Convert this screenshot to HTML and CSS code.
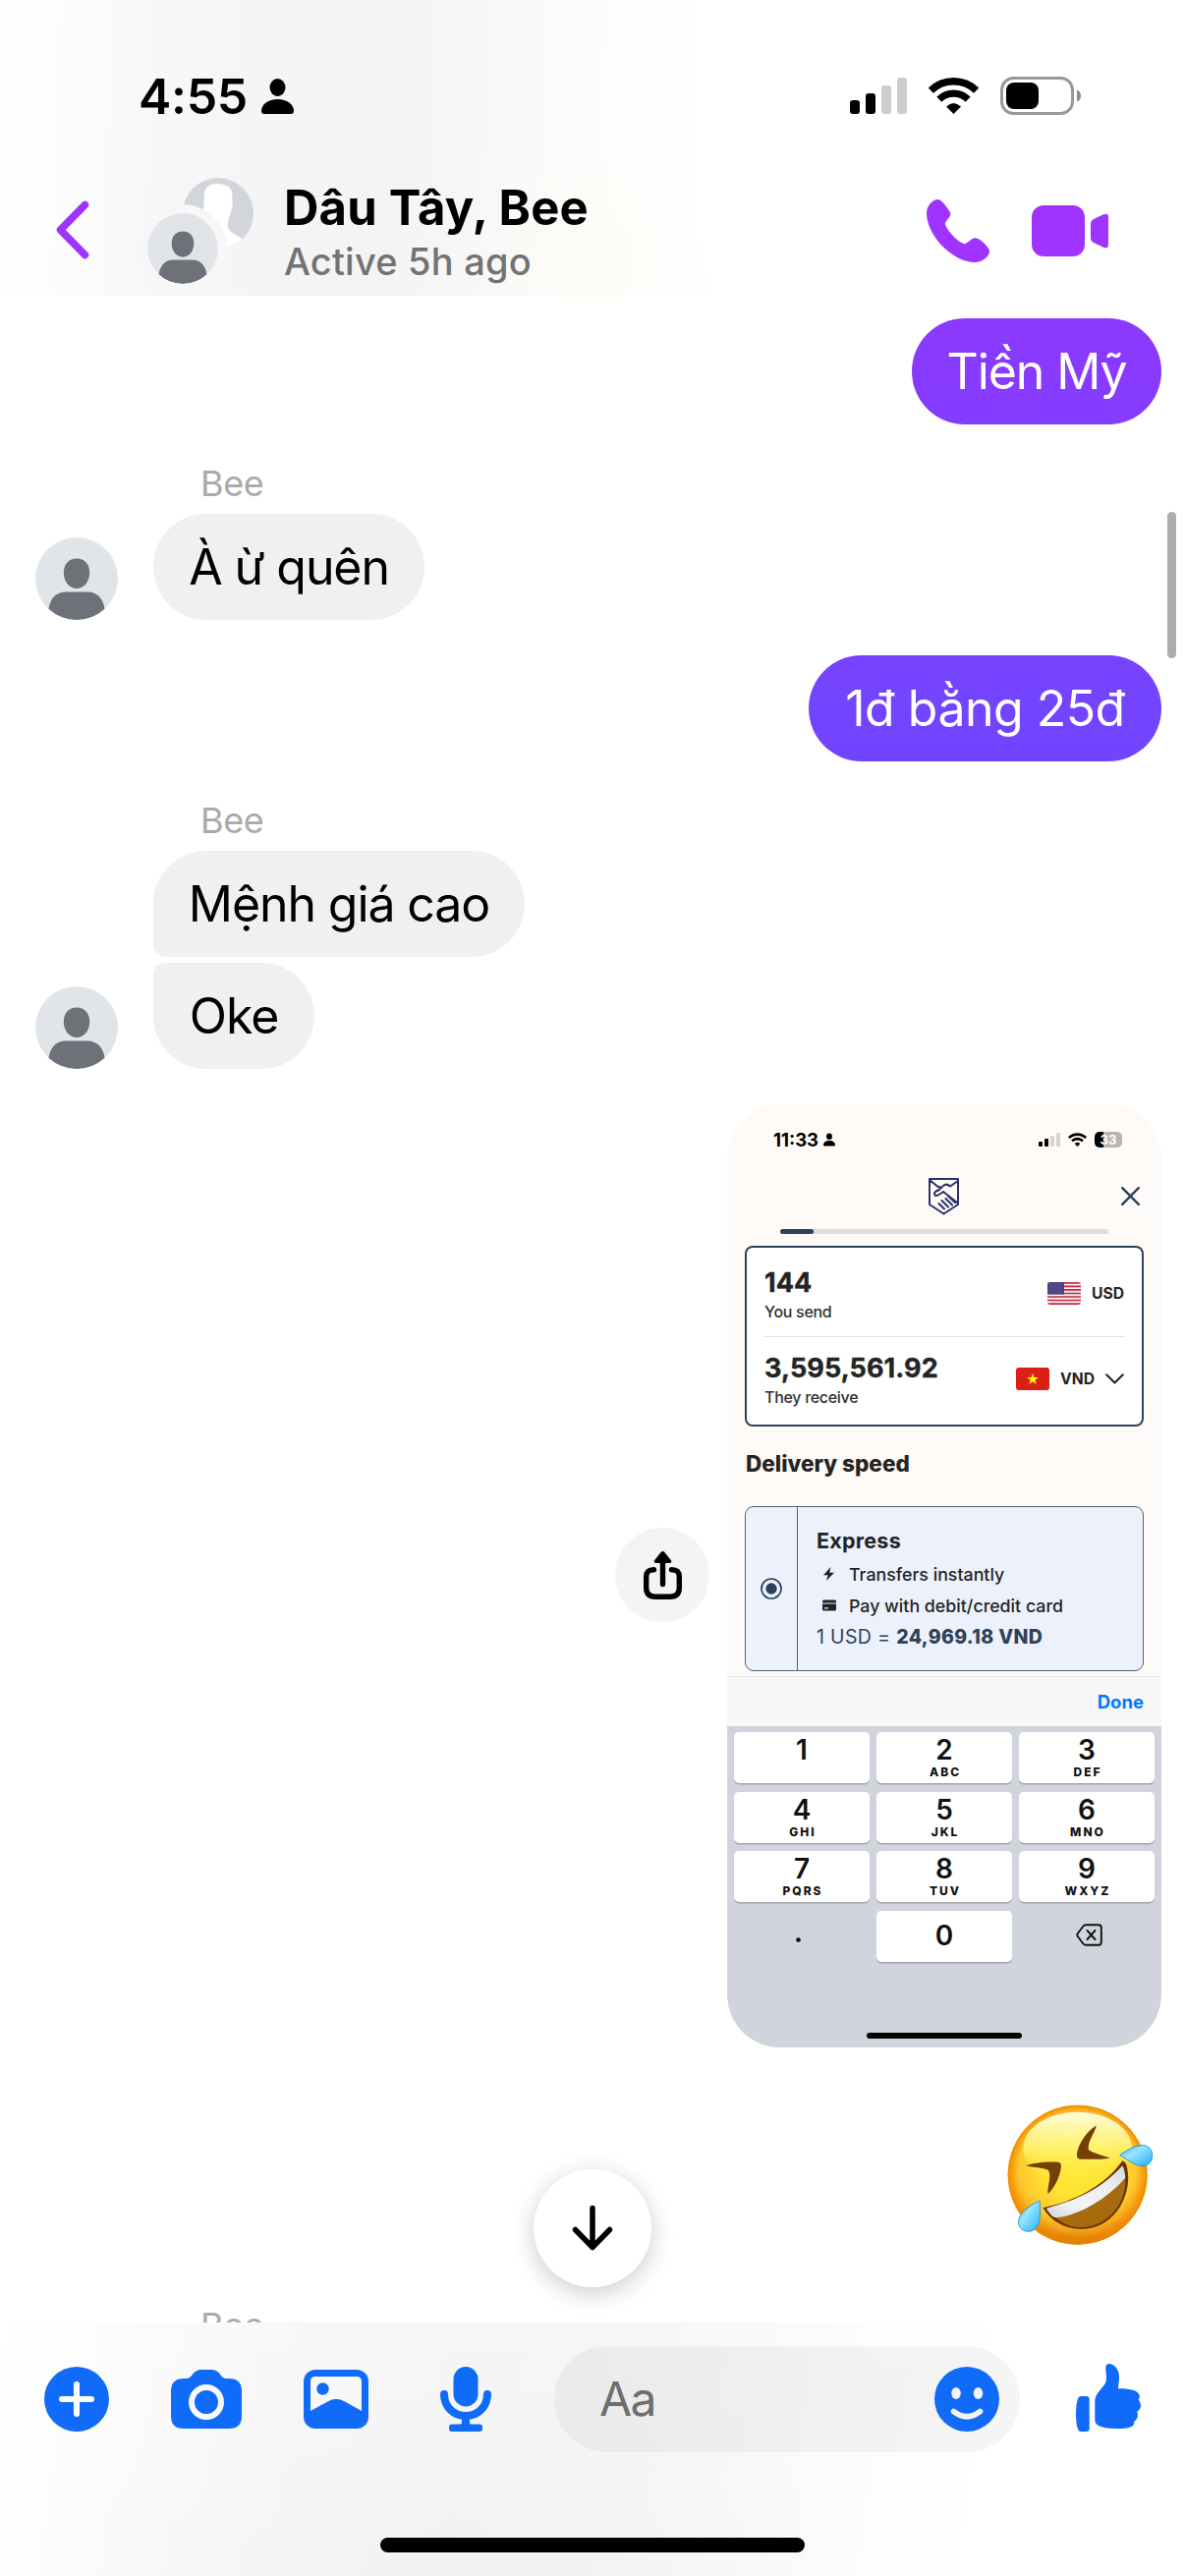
FILE: index.html
```html
<!DOCTYPE html>
<html lang="vi">
<head>
<meta charset="utf-8">
<title>Dâu Tây, Bee</title>
<link rel="stylesheet" href="styles.css">
</head>
<body>
<svg class="defs" aria-hidden="true">
  <symbol id="wifi" viewBox="0 0 51 37">
    <path d="M2.3 13.2A33.2 33.2 0 0 1 48.7 13.2" fill="none" stroke="currentColor" stroke-width="7.4"/>
    <path d="M10.8 22.1A20.9 20.9 0 0 1 40.2 22.1" fill="none" stroke="currentColor" stroke-width="7.2"/>
    <path d="M25.5 37L18 29.6Q25.5 22.4 33 29.6Z" fill="currentColor"/>
  </symbol>
  <symbol id="person" viewBox="0 0 33 36">
    <ellipse cx="16.5" cy="9" rx="8" ry="9"/>
    <path d="M3 36Q0 36 0 33C0 26 7 21 16.5 21S33 26 33 33Q33 36 30 36Z"/>
  </symbol>
  <symbol id="silhouette" viewBox="0 0 84 84">
    <circle cx="42" cy="42" r="42" fill="#e1e5ea"/>
    <path d="M42 21.5C50 21.5 55.200 27 55.200 36C55.200 45 49.500 52 42 52S28.800 45 28.800 36C28.800 27 34 21.500 42 21.500Z" fill="#6e7278"/>
    <path d="M13.500 72.800C15 62.500 21 55.500 31 55.500H53C63 55.500 69 62.500 70.500 72.800A42 42 0 0 1 13.500 72.800Z" fill="#6e7278"/>
  </symbol>
</svg>

<header class="header">
  <div class="status">
    <div class="clock">4:55<svg class="clock-person"><use href="#person"/></svg></div>
    <div class="status-icons">
      <svg width="58" height="37" viewBox="0 0 58 37">
        <rect y="23" width="10" height="14" rx="3"/><rect x="16" y="16" width="10" height="21" rx="3"/>
        <rect x="32" y="8" width="10" height="29" rx="3" fill="#ccc"/><rect x="48" width="10" height="37" rx="3" fill="#ccc"/>
      </svg>
      <svg class="wifi"><use href="#wifi"/></svg>
      <svg width="83" height="39" viewBox="0 0 83 39">
        <rect x="1.500" y="1.500" width="72" height="36" rx="12" fill="none" stroke="#999" stroke-width="3"/>
        <rect x="6" y="6" width="33" height="27" rx="8"/>
        <path d="M78 13.500Q82 15 82 19.500T78 25.500Z" fill="#8e8e8e"/>
      </svg>
    </div>
  </div>
  <div class="nav">
    <svg class="back" width="34" height="60" viewBox="0 0 34 60"><path d="M29.500 4.500L4.500 30L29.500 55.500" fill="none" stroke="#a033ff" stroke-width="7.500" stroke-linecap="round" stroke-linejoin="round"/></svg>
    <div class="group-avatar">
      <svg class="avatar-rear" viewBox="0 0 72 72">
        <circle cx="36" cy="36" r="36" fill="#d2d6db"/>
        <path d="M22 16C22 9 29 6 36 6C45 6 51 11 50.500 18Q49.500 21 50.500 24C51 32 48 37 46.500 42C45 48 46 52 49 55C53 58 57 59.500 60.500 62A36 36 0 0 1 36 72Q20 50 21 32Z" fill="#fff"/>
      </svg>
      <svg class="avatar-front"><use href="#silhouette"/></svg>
    </div>
    <div class="titles">
      <h1 class="title">Dâu Tây, Bee</h1>
      <p class="subtitle">Active 5h ago</p>
    </div>
    <div class="calls">
      <svg width="64" height="64" viewBox="0 0 64 64"><path d="M11.300 0C14 0 17 3 19.500 6.500C22 10 24.300 12.500 24.300 15C24.300 18 20 21 18.800 24.500C20 31 32 44 39 45.300C42.500 44 46 39.300 49.500 39.300C52 39.300 56 42 59 45C62 48 64 50.500 64 53C64 57.500 57 64 49 64C27 64 0 37 0 14C0 6 7 0 11.300 0Z"/></svg>
      <svg width="78" height="52" viewBox="0 0 78 52"><rect width="54" height="52" rx="12"/><path d="M60 18.500Q60 15.500 62.500 14.300L73 9.300Q78 7.500 78 12V40Q78 44.500 73 42.700L62.500 37.700Q60 36.500 60 33.500Z"/></svg>
    </div>
  </div>
</header>

<main class="chat">
  <div class="message sent"><div class="bubble bubble-first">Tiền Mỹ</div></div>

  <div class="sender">Bee</div>
  <div class="message">
    <svg class="avatar"><use href="#silhouette"/></svg>
    <div class="bubble w-quen">À ừ quên</div>
  </div>

  <div class="message sent spaced"><div class="bubble bubble-second">1đ bằng 25đ</div></div>

  <div class="sender">Bee</div>
  <div class="message">
    <svg class="avatar"><use href="#silhouette"/></svg>
    <div class="stack">
      <div class="bubble w-menh stack-top">Mệnh giá cao</div>
      <div class="bubble w-oke stack-bottom">Oke</div>
    </div>
  </div>

  <div class="message sent spaced">
    <button class="share" aria-label="Share">
      <svg width="39" height="49" viewBox="0 0 39 49"><path d="M10.500 18.700C5 18.700 2.700 21 2.700 26V37Q2.700 46.200 12 46.200H27Q36.300 46.200 36.300 37V26C36.300 21 34 18.700 28.500 18.700M19.500 10V33.500" fill="none" stroke="#000" stroke-width="5.400" stroke-linecap="round"/><path d="M17.800 .8Q19.500 -.6 21.200 .8L28 9.300Q29 12 26 12H13Q10 12 11 9.300Z"/></svg>
    </button>
    <section class="shot">
      <div class="shot-status">
        <span class="shot-clock">11:33<svg class="shot-person"><use href="#person"/></svg></span>
        <span class="shot-icons">
          <svg width="22" height="14" viewBox="0 0 22 14"><rect y="9" width="4" height="5" rx="1"/><rect x="6" y="6" width="4" height="8" rx="1"/><rect x="12" y="3" width="4" height="11" rx="1" fill="#d6d3d0"/><rect x="18" width="4" height="14" rx="1" fill="#d6d3d0"/></svg>
          <svg class="shot-wifi"><use href="#wifi"/></svg>
          <span class="shot-battery">33</span>
        </span>
      </div>
      <div class="shot-nav">
        <svg class="logo" width="31" height="38" viewBox="0 0 31 38"><path d="M1 1H30V27L15.500 36.500L1 27ZM1 2L9 8.500L13 10M9.500 13L15 8Q18 5 22 8.500L30 3M9.500 12.500Q4 15 7 18Q9 18.500 15 14L29 25M10.500 26L16 31.500M13.500 23L20 29.500M17.500 21L24 27.500M20 18.500L27 25" fill="none" stroke="#2b3169" stroke-width="2" stroke-linejoin="round" stroke-linecap="round"/></svg>
        <svg class="close" width="19" height="19" viewBox="0 0 19 19"><path d="M1.200 1.200L17.800 17.800M17.800 1.200L1.200 17.800" stroke="#2d425a" stroke-width="2.400" stroke-linecap="round"/></svg>
      </div>
      <div class="progress"><div class="progress-value"></div></div>
      <div class="amounts">
        <div class="amount-row amount-send">
          <div><div class="amount">144</div><div class="amount-label">You send</div></div>
          <div class="currency">
            <svg width="34" height="23" viewBox="0 0 34 23"><clipPath id="us"><rect width="34" height="23" rx="3"/></clipPath><g clip-path="url(#us)"><path fill="#f6eef0" d="M0 0h34v23H0z"/><path d="M0 .9h34M0 4.400h34M0 7.900h34M0 11.500h34M0 15h34M0 18.500h34M0 22.100h34" stroke="#c52a45" stroke-width="1.700"/><path fill="#45437f" d="M0 0h17v12.500H0z"/><path d="M1.500 2H16M3 4H15M1.500 6H16M3 8H15M1.500 10H16" stroke="#8583b0" stroke-width=".8" stroke-dasharray=".8 1.800"/></g></svg>
            <span>USD</span>
          </div>
        </div>
        <div class="amount-row amount-receive">
          <div><div class="amount">3,595,561.92</div><div class="amount-label">They receive</div></div>
          <div class="currency">
            <svg width="34" height="23" viewBox="0 0 34 23"><rect width="34" height="23" rx="3" fill="#da1f16"/><path d="M17 5.500L18.400 9.900H23L19.300 12.600L20.700 17L17 14.300L13.300 17L14.700 12.600L11 9.900H15.600Z" fill="#ff0"/></svg>
            <span>VND</span>
            <svg class="chevron" width="19" height="11" viewBox="0 0 19 11"><path d="M1.200 1.200L9.500 9.500L17.800 1.200" fill="none" stroke="#222" stroke-width="2" stroke-linecap="round" stroke-linejoin="round"/></svg>
          </div>
        </div>
      </div>
      <h2 class="speed-title">Delivery speed</h2>
      <div class="speed">
        <div class="speed-radio"><svg width="22" height="22" viewBox="0 0 22 22"><circle cx="11" cy="11" r="10" fill="none" stroke="#2d425a" stroke-width="1.700"/><circle cx="11" cy="11" r="5.700" fill="#2d425a"/></svg></div>
        <div class="speed-body">
          <div class="speed-name">Express</div>
          <div class="speed-item"><svg width="22" height="14" viewBox="0 0 22 14"><path d="M14.500 0L7 8.300H11.500L10 14L18 5.800H13.200Z" fill="#222"/></svg><span>Transfers instantly</span></div>
          <div class="speed-item"><svg width="22" height="14" viewBox="0 0 22 14"><rect x="6" y="1.500" width="14" height="11" rx="1.500" fill="#222"/><path d="M6 5H20M8 9.800H12" stroke="#edf1fb" stroke-width="1.200"/></svg><span>Pay with debit/credit card</span></div>
          <div class="rate">1 USD = <b>24,969.18 VND</b></div>
        </div>
      </div>
      <div class="toolbar">Done</div>
      <div class="keypad">
        <div class="key">1</div><div class="key">2<small>ABC</small></div><div class="key">3<small>DEF</small></div>
        <div class="key">4<small>GHI</small></div><div class="key">5<small>JKL</small></div><div class="key">6<small>MNO</small></div>
        <div class="key">7<small>PQRS</small></div><div class="key">8<small>TUV</small></div><div class="key">9<small>WXYZ</small></div>
        <div class="key-plain key-dot"><svg width="5" height="5" viewBox="0 0 5 5"><circle cx="2.500" cy="2.500" r="2.300"/></svg></div>
        <div class="key key-zero">0</div>
        <div class="key-plain key-delete"><svg width="27" height="23" viewBox="0 0 27 23"><path d="M10 1.200H23Q25.800 1.200 25.800 4V19Q25.800 21.800 23 21.800H10Q8.500 21.800 7.500 20.500L1.800 13Q.8 11.500 1.800 10L7.500 2.500Q8.500 1.200 10 1.200ZM11.500 7L19.500 16M19.500 7L11.500 16" fill="none" stroke="#111" stroke-width="1.900" stroke-linecap="round"/></svg></div>
        <div class="shot-home"></div>
      </div>
    </section>
  </div>

  <div class="message sent spaced emoji-row">
    <svg class="emoji" viewBox="130 90 460 445" role="img" aria-label="🤣">
      <defs>
        <linearGradient id="face" x1="0" y1="0" x2="0" y2="1"><stop offset="0" stop-color="#ffb818"/><stop offset=".5" stop-color="#fdae17"/><stop offset=".8" stop-color="#f3980f"/><stop offset="1" stop-color="#d97a08"/></linearGradient>
        <radialGradient id="glow" cx=".5" cy=".42" r=".56"><stop offset="0" stop-color="#ffe838"/><stop offset=".45" stop-color="#ffe22f"/><stop offset=".78" stop-color="#fdc92e"/><stop offset="1" stop-color="#fbac1b" stop-opacity="0"/></radialGradient>
        <radialGradient id="rim" cx=".5" cy=".5" r=".5"><stop offset=".86" stop-color="#f08a00" stop-opacity="0"/><stop offset="1" stop-color="#ee8300" stop-opacity=".75"/></radialGradient>
        <linearGradient id="shine" x1="0" y1="0" x2="0" y2="1"><stop offset="0" stop-color="#fffbe0"/><stop offset=".45" stop-color="#fff884" stop-opacity=".8"/><stop offset="1" stop-color="#ffec40" stop-opacity="0"/></linearGradient>
        <linearGradient id="tear" x1="0" y1="0" x2="1" y2="1"><stop offset="0" stop-color="#2fb3ee"/><stop offset=".4" stop-color="#9be4ff"/><stop offset="1" stop-color="#1fb0fa"/></linearGradient>
        <linearGradient id="teeth" x1="0" y1="1" x2="1" y2="0"><stop offset="0" stop-color="#d5d5da"/><stop offset=".3" stop-color="#f2f3f6"/><stop offset=".7" stop-color="#eceef1"/><stop offset="1" stop-color="#d8d8dd"/></linearGradient>
      </defs>
      <circle cx="351" cy="311" r="213" fill="url(#face)"/>
      <circle cx="351" cy="311" r="205" fill="url(#glow)"/>
      <circle cx="351" cy="311" r="213" fill="url(#rim)"/>
      <ellipse cx="351" cy="230" rx="166" ry="111" fill="url(#shine)"/>
      <path d="M409 160C378 178 349 223 349 253Q349 263 360 263C390 264 425 264 450 260C425 250 398 245 384 234C383 205 402 188 409 160Z" fill="#744006"/>
      <path d="M193 283C220 273 260 270 292 272Q302 274 301 285C298 315 281 352 260 370C258 345 273 318 262 297C242 288 218 290 193 283Z" fill="#744006"/>
      <path d="M488 268Q500 271 503 293C518 363 472 475 362 477C310 477 268 450 245 412C345 392 437 342 488 268Z" fill="#6b3300"/>
      <path d="M496 322C503 390 450 470 362 472C333 472 304 458 285 443C360 432 430 390 496 322Z" fill="#a66b0d"/>
      <path d="M488 283Q495 296 497 320C440 384 365 430 290 442Q279 443 272 436L257 417Q255 412 264 411C355 386 425 352 488 283Z" fill="url(#teeth)"/>
      <path d="M480 251C507 231 533 220 551 221C570 222 579 236 579 252C579 270 568 283 550 284C528 285 506 265 480 251Z" fill="url(#tear)" stroke="#1a9be0" stroke-width="3"/>
      <path d="M235 390C238 420 238 445 230 464C221 482 203 488 187 481C171 473 167 456 174 440C184 420 210 401 235 390Z" fill="url(#tear)" stroke="#1a9be0" stroke-width="3"/>
    </svg>
  </div>

  <div class="sender">Bee</div>
  <div class="scrollbar"></div>
  <button class="to-bottom" aria-label="Scroll to bottom"><svg width="44" height="50" viewBox="0 0 44 50"><path d="M22 4.500V43M4.500 26.500L22 44.500L39.500 26.500" fill="none" stroke="#000" stroke-width="5.500" stroke-linecap="round" stroke-linejoin="round"/></svg></button>
</main>

<footer class="footer">
  <div class="composer">
    <svg width="66" height="66" viewBox="0 0 66 66"><circle cx="33" cy="33" r="33"/><path d="M33 18V48M18 33H48" stroke="#fff" stroke-width="6" stroke-linecap="round"/></svg>
    <svg class="camera" width="72" height="60" viewBox="0 0 72 60"><path d="M13 9H16C20 9 21 5 24 2.500Q26.500 0 30 0H42Q45.500 0 48 2.500C51 5 52 9 56 9H59Q72 9 72 22V47Q72 60 59 60H13Q0 60 0 47V22Q0 9 13 9Z"/><circle cx="36" cy="33" r="15" fill="none" stroke="#f8f8f8" stroke-width="6"/></svg>
    <svg class="photo" width="66" height="60" viewBox="0 0 66 60"><rect width="66" height="60" rx="12"/><path d="M12 7H54Q59 7 59 12V42L42 32.500Q33 27 24.500 32.500L7 42V12Q7 7 12 7Z" fill="#f7f7f7"/><circle cx="19.500" cy="19.500" r="6.200"/></svg>
    <svg class="mic" width="52" height="66" viewBox="0 0 52 66"><rect x="13.500" width="25" height="40.500" rx="12.500"/><path d="M4 28C4 41 14 50 26 50S48 41 48 28" fill="none" stroke="#0f6bf8" stroke-width="8" stroke-linecap="round"/><path d="M22 52H30V57Q30 58.500 32 58.500H40Q43 58.500 43 61.500V63Q43 66 40 66H12Q9 66 9 63V61.500Q9 58.500 12 58.500H20Q22 58.500 22 57Z"/></svg>
    <div class="input">
      <span class="placeholder">Aa</span>
      <svg width="66" height="66" viewBox="0 0 66 66"><circle cx="33" cy="33" r="33"/><ellipse cx="22" cy="27" rx="4.800" ry="6" fill="#f3f3f3"/><ellipse cx="44.500" cy="27" rx="4.800" ry="6" fill="#f3f3f3"/><path d="M19.500 45.500Q33 56 46.500 45.500" fill="none" stroke="#f3f3f3" stroke-width="5.600" stroke-linecap="round"/></svg>
    </div>
    <svg class="like" width="66" height="69" viewBox="0 0 66 69"><path d="M33.500 0C40 0 44.500 7 44 15C43.800 19 43 22 43 25.300C54 25 64.500 27 64.800 33C64.800 35 64 36 63.500 36.500C65 38 66 40.500 66 43C66 45.500 64 47.500 62 48.800C63 50 63 52 62.800 54C62 57 60 58 59 59C59.500 60 59 61.500 58.500 62.500C56 65.500 48 66 41 66C33 66 27 65 23 63C20.500 61.500 19.300 60 19.300 57V39C19.300 32 23 29 26 25C29 21.500 31 19 31 15C31 10 29.800 6 30.500 2.500C30.800 1 32 0 33.500 0Z"/><path d="M4.500 33H10.500Q13.700 33 13.700 36V66Q13.700 69 10.500 69H4.500C1.500 69 0 60 0 51C0 42 1.500 33 4.500 33Z"/></svg>
  </div>
  <div class="home"></div>
</footer>
</body>
</html>
```
FILE: styles.css
```css
* { box-sizing: border-box; margin: 0; padding: 0; }

body {
  width: 1206px;
  height: 2622px;
  display: flex;
  flex-direction: column;
  overflow: hidden;
  background: #fff;
  color: #000;
  font-family: Inter, "Liberation Sans", sans-serif;
}

svg { display: block; flex: none; }
button { border: 0; font: inherit; }
.defs { position: absolute; width: 0; height: 0; }

/* Header */
.header {
  height: 301px;
  flex: none;
  background:
    radial-gradient(ellipse 130px 170px at 600px 301px, rgba(255, 251, 242, .6), rgba(255, 251, 242, 0)),
    linear-gradient(92deg, #fefefe 0, #fbfcfc 80px, #f7f7f7 170px, #f4f4f4 310px, #f4f4f4 410px, #f9f9f8 530px, #fdfdfc 630px, #fff 720px);
}
.status {
  height: 181px;
  padding: 74px 105px 0 141px;
  display: flex;
  justify-content: space-between;
  align-items: flex-start;
}
.clock {
  display: flex;
  align-items: center;
  gap: 14px;
  height: 48px;
  font-size: 50px;
  font-weight: 600;
  letter-spacing: -.3px;
}
.clock-person { width: 33px; height: 36px; }
.status-icons { display: flex; align-items: center; gap: 22px; height: 47px; }
.wifi { width: 51px; height: 37px; }
.nav { display: flex; align-items: flex-start; padding-left: 57px; }
.back { margin-top: 23px; }
.group-avatar { position: relative; width: 108px; height: 108px; margin-left: 59px; }
.avatar-rear { width: 72px; height: 72px; margin-left: 36px; }
.avatar-front {
  position: absolute;
  left: 0;
  top: 36px;
  width: 72px;
  height: 72px;
  border-radius: 50%;
  box-shadow: 0 0 0 9px #f7f7f7;
}
.titles { margin-left: 31px; flex: 1; white-space: nowrap; }
.title { font-size: 49px; line-height: 60px; font-weight: 700; margin-top: 1px; letter-spacing: .2px; }
.subtitle { font-size: 38px; line-height: 44px; font-weight: 500; color: #737373; margin-top: 2px; letter-spacing: .2px; }
.calls { display: flex; align-items: center; gap: 43px; padding: 22px 78px 0 0; fill: #a033ff; }

/* Conversation */
.chat { position: relative; flex: 1; min-height: 0; padding: 23px 24px 0 36px; }
.message { display: flex; align-items: flex-end; }
.sent { justify-content: flex-end; }
.spaced { margin-top: 36px; }
.avatar { width: 84px; height: 84px; margin-right: 36px; }
.sender {
  margin: 38px 0 9px 168px;
  font-size: 36px;
  line-height: 44px;
  letter-spacing: -.4px;
  color: #aaa;
}
.bubble {
  height: 108px;
  border-radius: 54px;
  background: #f0f0f0;
  text-align: center;
  font-size: 50px;
  line-height: 108px;
  letter-spacing: -1.100px;
  white-space: nowrap;
}
.bubble-first { width: 254px; background: linear-gradient(#8c39ff, #843cff); color: #fff; }
.bubble-second { width: 359px; background: linear-gradient(#7743ff, #7045ff); color: #fff; letter-spacing: -.500px; }
.w-quen { width: 276px; }
.w-menh { width: 378px; }
.w-oke { width: 164px; }
.stack { display: flex; flex-direction: column; gap: 6px; }
.stack-top { border-bottom-left-radius: 12px; }
.stack-bottom { border-top-left-radius: 12px; }
.share {
  width: 96px;
  height: 96px;
  margin: 0 18px 2px 0;
  align-self: center;
  display: flex;
  justify-content: center;
  align-items: center;
  border-radius: 50%;
  background: #f4f4f4;
}
.emoji-row { height: 187px; align-items: center; }
.emoji { width: 153.300px; height: 148.300px; margin: 2px 6px 0 0; }
.scrollbar {
  position: absolute;
  right: 9px;
  top: 220px;
  width: 9px;
  height: 149px;
  border-radius: 5px;
  background: #adadad;
}
.to-bottom {
  position: absolute;
  left: 543px;
  bottom: 36px;
  width: 120px;
  height: 120px;
  border-radius: 50%;
  background: #fff;
  box-shadow: 0 6px 24px rgba(0, 0, 0, .2);
  display: flex;
  justify-content: center;
  align-items: center;
}

/* Shared money transfer screenshot */
.shot {
  width: 442px;
  height: 960px;
  border-radius: 54px;
  overflow: hidden;
  background: #fefaf7;
  color: #242424;
  display: flex;
  flex-direction: column;
}
.shot-status {
  height: 73px;
  padding: 0 40px 2px 47px;
  display: flex;
  justify-content: space-between;
  align-items: center;
  color: #000;
}
.shot-clock { display: flex; align-items: center; gap: 5px; font-size: 18.500px; font-weight: 700; }
.shot-person { width: 12px; height: 14px; }
.shot-icons { display: flex; align-items: center; gap: 8px; }
.shot-wifi { width: 19px; height: 14px; }
.shot-battery {
  width: 28px;
  height: 16px;
  border-radius: 5px;
  background: linear-gradient(90deg, #000 33%, #b9b5b2 33%);
  color: #fff;
  font-size: 13px;
  font-weight: 700;
  line-height: 16px;
  text-align: center;
}
.shot-nav { height: 41px; padding-right: 22px; display: grid; grid-template-columns: 1fr auto 1fr; align-items: center; }
.logo { grid-column: 2; margin-left: 21px; }
.close { grid-column: 3; justify-self: end; }
.progress { height: 5px; margin: 13px 54px 0; border-radius: 3px; background: #dedbd8; }
.progress-value { width: 34px; height: 5px; border-radius: 3px; background: #2d425a; }
.amounts { height: 184px; margin: 12px 18px 0; padding: 0 17px; border: 2px solid #2d425a; border-radius: 8px; background: #fff; }
.amount-row { display: flex; justify-content: space-between; padding: 0 1px; }
.amount-send { height: 91px; padding-top: 20px; border-bottom: 1px solid #e3e3e3; }
.amount-receive { padding-top: 16px; }
.amount { font-size: 27px; line-height: 32px; font-weight: 700; letter-spacing: .1px; -webkit-text-stroke: .4px; }
.amount-label { font-size: 16px; line-height: 26px; font-weight: 500; letter-spacing: -.3px; color: #303030; }
.currency { display: flex; align-items: center; gap: 11px; height: 24px; margin-top: 14px; font-size: 15.700px; font-weight: 700; }
.speed-title { margin: 22px 19px 0; font-size: 22.500px; line-height: 32px; font-weight: 800; letter-spacing: 0; }
.speed { display: flex; height: 168px; margin: 27px 18px 0; border: 1px solid #51617a; border-radius: 9px; background: #edf1fb; }
.speed-radio { width: 53px; border-right: 1px solid #51617a; display: flex; align-items: center; justify-content: center; }
.speed-body { padding: 20px 0 0 19px; white-space: nowrap; }
.speed-name { font-size: 21.500px; line-height: 29px; font-weight: 700; letter-spacing: .25px; margin-bottom: 3px; }
.speed-item { display: flex; align-items: center; gap: 11px; height: 32px; font-size: 17.800px; font-weight: 500; }
.rate { font-size: 19.500px; line-height: 33px; letter-spacing: .35px; color: #2d425a; }
.rate b { font-weight: 800; }
.toolbar {
  height: 51px;
  margin-top: 5px;
  padding-right: 18px;
  border-top: 1px solid #e9e9e9;
  background: #f7f7f7;
  color: #007aff;
  font-size: 18.500px;
  font-weight: 700;
  line-height: 50px;
  text-align: right;
}
.keypad {
  flex: 1;
  padding: 6px 7px 0;
  display: grid;
  grid-template-columns: repeat(3, 138px);
  grid-auto-rows: 52px;
  gap: 8.500px 7px;
  background: #d1d4dc;
}
.key {
  padding-top: 4px;
  border-radius: 5px;
  background: #fff;
  box-shadow: 0 1.500px 0 #a2a4aa;
  color: #111;
  font-size: 28px;
  line-height: 28px;
  font-weight: 600;
  text-align: center;
}
.key small { display: block; font-size: 12px; line-height: 14px; font-weight: 800; letter-spacing: 2px; padding-left: 2px; margin-top: 2px; }
.key-zero { padding-top: 11px; }
.key-plain { display: flex; justify-content: center; align-items: center; }
.key-dot { padding: 7px 7px 0 0; }
.key-delete { padding-left: 4px; padding-bottom: 3px; }
.shot-home { grid-column: 1 / -1; justify-self: center; align-self: start; width: 158px; height: 6px; margin-top: 64px; border-radius: 3px; background: #000; }

/* Composer */
.footer {
  position: relative;
  height: 258px;
  flex: none;
  padding-top: 24px;
  background:
    linear-gradient(rgba(255, 255, 255, .3), rgba(255, 255, 255, 0)),
    linear-gradient(98deg, #fff 0, #fdfdfd 60px, #f8f8f8 190px, #f4f4f4 320px, #f2f2f2 480px, #f3f3f3 640px, #f7f7f7 760px, #fcfcfc 880px, #fff 1010px);
}
.composer { display: flex; align-items: center; height: 108px; padding-left: 45px; fill: #0f6bf8; }
.camera { margin-left: 63px; }
.photo { margin-left: 63px; }
.mic { margin-left: 73px; }
.input {
  width: 474px;
  height: 108px;
  margin-left: 64px;
  padding: 0 21px 0 46px;
  display: flex;
  align-items: center;
  justify-content: space-between;
  border-radius: 54px;
  background: rgba(0, 0, 0, .04);
  color: #6e6e6e;
  font-size: 48px;
}
.placeholder { letter-spacing: -1.500px; margin-bottom: 2px; }
.like { margin: 0 0 3px 57px; }
.home { width: 432px; height: 15px; margin: 87px auto 0; border-radius: 8px; background: #000; }
```
